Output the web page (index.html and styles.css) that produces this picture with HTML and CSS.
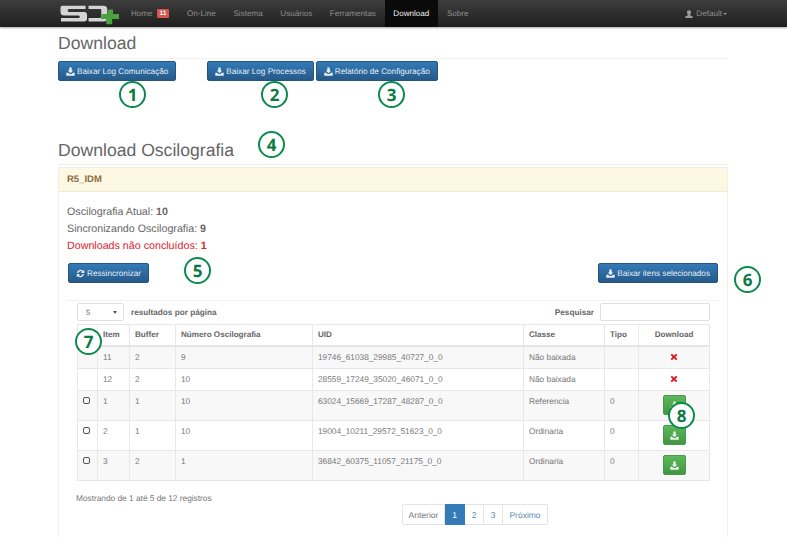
FILE: index.html
```html
<!DOCTYPE html>
<html lang="pt">
<head>
<meta charset="utf-8">
<title>Download</title>
<link rel="stylesheet" href="styles.css">
</head>
<body>
<svg class="defs" width="0" height="0" aria-hidden="true">
  <symbol id="save" viewBox="0 0 12 12">
    <path d="M4.400 0.600h3.200v3.900h2L6 8.200 2.400 4.500h2z"/>
    <path d="M0.400 7.600h2.500l1.600 1.700h3l1.600-1.700h2.500v3.900H0.400z"/>
  </symbol>
</svg>
<div class="page">
  <nav class="navbar">
    <svg class="logo" viewBox="0 0 62 22" aria-hidden="true">
      <path class="logo-s" d="M2 2.500h24v3.500H9c-1.500 0-1.500 3 0 3h15c3 0 3.500 1.500 3.500 3.500v3c0 2-1 3-3 3H1v-3.500h18c1.500 0 1.500-2.500 0-2.500H4c-2.500 0-3.500-1.500-3.500-3.500V5.500C.5 3.500 1 2.500 2 2.500z"/>
      <path class="logo-s" d="M29 2.500h15c3 0 4 1.500 4 3.500v9c0 2-1 3.500-3.500 3.500H29V15h11c1.500 0 2-.5 2-2V7.500c0-1-.5-1.500-1.500-1.500H29z"/>
      <path class="logo-p" d="M48.500 6.500h5.500v4.500h6v5h-7v5.500h-6v-5.500H41.500l1-5h6z"/>
    </svg>
    <a class="nav-link nav-home">Home <span class="badge">11</span></a>
    <a class="nav-link">On-Line</a>
    <a class="nav-link">Sistema</a>
    <a class="nav-link">Usuários</a>
    <a class="nav-link">Ferramentas</a>
    <a class="nav-link active">Download</a>
    <a class="nav-link">Sobre</a>
    <a class="nav-user">
      <svg class="user-icon" viewBox="0 0 10 10" aria-hidden="true"><path d="M5 .4c1.600 0 2.500 1.100 2.500 2.700 0 1.200-.6 2.200-1.200 2.700v.8l3.300 1.400V10H.4V8l3.300-1.400v-.8C3.100 5.300 2.500 4.300 2.500 3.100 2.500 1.500 3.400.4 5 .4z"/></svg>
      Default<span class="caret"></span>
    </a>
  </nav>

  <main class="container">
    <h1 class="title">Download</h1>
    <div class="top-actions">
      <button class="btn btn-blue btn-log1"><svg class="ico"><use href="#save"/></svg>Baixar Log Comunicação</button>
      <button class="btn btn-blue"><svg class="ico"><use href="#save"/></svg>Baixar Log Processos</button>
      <button class="btn btn-blue"><svg class="ico"><use href="#save"/></svg>Relatório de Configuração</button>
    </div>

    <h2 class="title title-second">Download Oscilografia</h2>

    <section class="panel">
      <header class="panel-head">R5_IDM</header>
      <div class="panel-body">
        <p class="stat">Oscilografia Atual: <b>10</b></p>
        <p class="stat">Sincronizando Oscilografia: <b>9</b></p>
        <p class="stat stat-red">Downloads não concluídos: <b>1</b></p>
        <div class="action-row">
          <button class="btn btn-blue btn-resync">
            <svg class="ico" viewBox="0 0 12 12" aria-hidden="true"><path d="M1.200 5.300A4.900 4.900 0 0 1 9.500 2.500L11 1v4.200H6.800l1.500-1.500A3.200 3.200 0 0 0 3 5.300zM10.800 6.700A4.900 4.900 0 0 1 2.500 9.500L1 11V6.800h4.200L3.700 8.300A3.200 3.200 0 0 0 9 6.700z"/></svg>Ressincronizar</button>
          <button class="btn btn-blue"><svg class="ico"><use href="#save"/></svg>Baixar itens selecionados</button>
        </div>
        <div class="table-wrap">
          <div class="table-tools">
            <div class="select-box"><span>5</span><span class="select-arrow"></span></div>
            <span class="tool-label">resultados por página</span>
            <span class="tool-label search-label">Pesquisar</span>
            <div class="search-box"></div>
          </div>
          <table class="grid">
            <colgroup>
              <col class="c-check"><col class="c-item"><col class="c-buffer"><col class="c-num"><col class="c-uid"><col class="c-class"><col class="c-type"><col class="c-down">
            </colgroup>
            <thead>
              <tr><th></th><th>Item</th><th>Buffer</th><th>Número Oscilografia</th><th>UID</th><th>Classe</th><th>Tipo</th><th class="center">Download</th></tr>
            </thead>
            <tbody>
              <tr class="odd"><td></td><td>11</td><td>2</td><td>9</td><td>19746_61038_29985_40727_0_0</td><td>Não baixada</td><td></td><td class="center"><svg class="cross" viewBox="0 0 10 10" aria-hidden="true"><path d="M2.400.8 5 3.400 7.600.8l1.600 1.600L6.600 5l2.600 2.600-1.600 1.600L5 6.600 2.400 9.200.8 7.600 3.400 5 .8 2.400z"/></svg></td></tr>
              <tr><td></td><td>12</td><td>2</td><td>10</td><td>28559_17249_35020_46071_0_0</td><td>Não baixada</td><td></td><td class="center"><svg class="cross" viewBox="0 0 10 10" aria-hidden="true"><path d="M2.400.8 5 3.400 7.600.8l1.600 1.600L6.600 5l2.600 2.600-1.600 1.600L5 6.600 2.400 9.200.8 7.600 3.400 5 .8 2.400z"/></svg></td></tr>
              <tr class="odd tall"><td><span class="check"></span></td><td>1</td><td>1</td><td>10</td><td>63024_15669_17287_48287_0_0</td><td>Referencia</td><td>0</td><td class="center"><button class="btn-green"><svg class="ico-g"><use href="#save"/></svg></button></td></tr>
              <tr class="tall"><td><span class="check"></span></td><td>2</td><td>1</td><td>10</td><td>19004_10211_29572_51623_0_0</td><td>Ordinaria</td><td>0</td><td class="center"><button class="btn-green"><svg class="ico-g"><use href="#save"/></svg></button></td></tr>
              <tr class="odd tall"><td><span class="check"></span></td><td>3</td><td>2</td><td>1</td><td>36842_60375_11057_21175_0_0</td><td>Ordinaria</td><td>0</td><td class="center"><button class="btn-green"><svg class="ico-g"><use href="#save"/></svg></button></td></tr>
            </tbody>
          </table>
          <p class="info">Mostrando de 1 até 5 de 12 registros</p>
          <div class="pager">
            <a class="pg pg-prev">Anterior</a><a class="pg pg-on">1</a><a class="pg">2</a><a class="pg">3</a><a class="pg pg-next">Próximo</a>
          </div>
        </div>
      </div>
    </section>
  </main>

  <span class="mark m1">1</span>
  <span class="mark m2">2</span>
  <span class="mark m3">3</span>
  <span class="mark m4">4</span>
  <span class="mark m5">5</span>
  <span class="mark m6">6</span>
  <span class="mark m7">7</span>
  <span class="mark m8">8</span>
</div>
</body>
</html>
```
FILE: styles.css
```css
* { box-sizing: border-box; }
html, body { margin: 0; padding: 0; background: #fff; }
body { font-family: "Liberation Sans", Arial, sans-serif; color: #666; text-rendering: geometricPrecision; }
.defs { position: absolute; }
.page { position: relative; width: 787px; height: 537px; overflow: hidden; }

/* navbar */
.navbar { display: flex; align-items: center; height: 27px; padding: 0 60px; background: linear-gradient(#3d3d3d, #1f1f1f); box-shadow: 0 1px 2px rgba(0,0,0,.35); font-size: 8.100px; color: #8f8f8f; }
.logo { width: 61px; height: 22px; flex: none; }
.logo-s { fill: #d4d4d4; }
.logo-p { fill: #4aa340; }
.nav-link { display: flex; align-items: center; height: 27px; padding: 0 8.800px; }
.nav-home { margin-left: 1px; padding-left: 9px; }
.badge { display: inline-block; margin-left: 4px; padding: 0 3px; height: 9px; line-height: 9px; background: #d9534f; color: #fff; font-size: 6.500px; font-weight: 700; border-radius: 1px; }
.active { background: #0a0a0a; color: #f0f0f0; }
.nav-user { display: flex; align-items: center; margin-left: auto; }
.user-icon { width: 8px; height: 8px; margin-right: 3px; fill: #9c9c9c; }
.caret { width: 0; height: 0; margin-left: 1px; border: 2.500px solid transparent; border-top-color: #8f8f8f; border-bottom: 0; }

/* layout */
.container { width: 670px; margin-left: 58px; }
.title { margin: 0; font-weight: 400; color: #666; font-size: 17.600px; line-height: 21px; padding-top: 6px; height: 32px; border-bottom: 1px solid #f2f2f2; }
.title-second { height: 43px; padding-top: 18px; margin-top: 41px; border-bottom: 1px solid #eee; }
.top-actions { display: flex; gap: 2px; margin-top: 2px; height: 20px; }
.btn-log1 { margin-right: 29px; }

.btn { display: inline-flex; align-items: center; height: 20px; padding: 0 7px; background: linear-gradient(#337ab7, #265a88); border: 1px solid #245580; border-radius: 2px; color: #e4edf5; font: 8.180px "Liberation Sans", Arial, sans-serif; text-rendering: geometricPrecision; white-space: nowrap; }
.ico { flex: none; width: 9px; height: 9px; margin-right: 2px; fill: #e8f0f7; }
.btn-resync { margin-left: 1px; }

/* panel */
.panel { margin-top: 2px; height: 500px; border: 1px solid #f3eede; border-bottom: 0; }
.panel-head { height: 24px; padding: 0 8px; line-height: 24px; background: #fcf8e3; border-bottom: 1px solid #f3ecd2; color: #8a6d3b; font-size: 9.500px; font-weight: 700; }
.panel-body { padding: 12px 9px 0 8px; }
.stat { margin: 0; height: 17px; line-height: 17px; font-size: 10.700px; color: #666; }
.stat-red { color: #d9232e; }
.action-row { display: flex; justify-content: space-between; margin-top: 8px; }

/* data table */
.table-wrap { margin-top: 17px; padding: 2px 8px 0 10px; border-top: 1px solid #f2f2f2; }
.table-tools { display: flex; align-items: center; height: 18px; font-size: 8.200px; }
.select-box { display: flex; align-items: center; justify-content: space-between; width: 47px; height: 18px; padding: 0 6px 0 8px; border: 1px solid #e0e0e0; border-radius: 2px; font-size: 7.500px; color: #666; }
.select-arrow { width: 0; height: 0; border: 2px solid transparent; border-top: 3px solid #555; border-bottom: 0; }
.tool-label { margin-left: 7px; font-weight: 700; color: #666; }
.search-label { margin-left: auto; }
.search-box { width: 110px; height: 18px; margin-left: 6px; border: 1px solid #e0e0e0; border-radius: 2px; }

.grid { table-layout: fixed; width: 632px; margin-top: 3px; border-collapse: collapse; font-size: 8.300px; color: #777; }
.c-check { width: 20px; } .c-item { width: 32px; } .c-buffer { width: 46px; } .c-num { width: 137px; } .c-uid { width: 211px; } .c-class { width: 81px; } .c-type { width: 34px; } .c-down { width: 71px; }
.grid th, .grid td { padding: 0 5px; border: 1px solid #e8e8e8; text-align: left; vertical-align: top; }
.grid th { height: 21px; line-height: 20px; font-size: 8.100px; font-weight: 700; color: #666; border-bottom: 2px solid #e4e4e4; }
.grid td { height: 22px; line-height: 21px; }
.grid .tall td { height: 30px; }
.grid .center { text-align: center; padding: 0; }
.odd { background: #f8f8f8; }
.cross { display: block; width: 8px; height: 8px; margin: 6px auto 0; fill: #e0101a; }
.check { display: block; width: 7px; height: 7px; margin-top: 6px; border: 1.700px solid #555; border-radius: 2px; background: #f5f5f5; }
.btn-green { display: block; width: 23px; height: 20px; margin: 4px auto 0; padding: 0; background: linear-gradient(#5cb85c, #419641); border: 1px solid #4a9a4a; border-radius: 2px; }
.ico-g { display: block; width: 9px; height: 9px; margin: 0 auto; fill: #eaf5ea; }

.info { margin: 11px 0 0 -1px; height: 12px; line-height: 12px; font-size: 8.300px; color: #777; }
.pager { display: flex; margin: 0 0 0 325px; height: 21px; }
.pg { display: flex; align-items: center; justify-content: center; width: 19px; border: 1px solid #e4e4e4; border-left: 0; font-size: 8.500px; color: #5d86ad; }
.pg-prev { width: 43px; border-left: 1px solid #e4e4e4; color: #777; border-radius: 2px 0 0 2px; }
.pg-on { width: 20px; background: #337ab7; border-color: #337ab7; color: #fff; }
.pg-next { width: 45px; border-radius: 0 2px 2px 0; }

/* numbered annotations placed over the screenshot */
.mark { position: absolute; width: 27px; height: 27px; border: 2px solid #0b8a4b; border-radius: 50%; background: #fff; color: #0b7a42; font: 700 17px/23px "Open Sans", "Liberation Sans", sans-serif; text-align: center; }
.m1 { left: 119px; top: 81px; }
.m2 { left: 261px; top: 81px; }
.m3 { left: 378px; top: 81px; }
.m4 { left: 258px; top: 131px; }
.m5 { left: 184px; top: 257px; }
.m6 { left: 734px; top: 266px; }
.m7 { left: 75px; top: 328px; }
.m8 { left: 668px; top: 402px; }
```
